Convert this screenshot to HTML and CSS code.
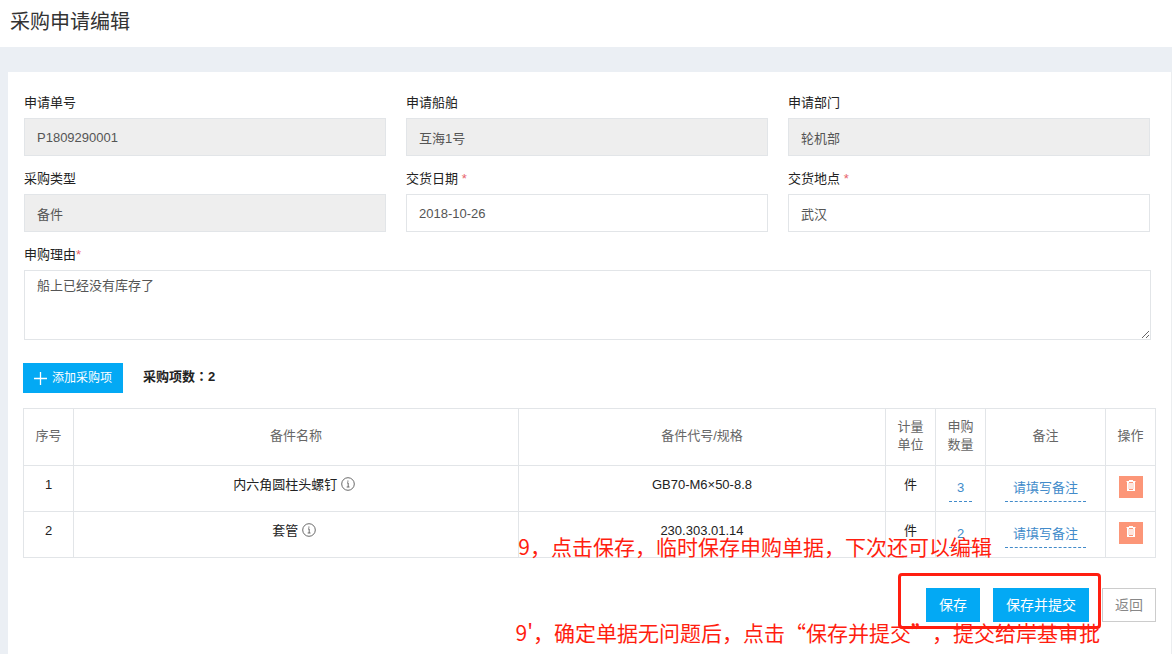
FILE: index.html
```html
<!DOCTYPE html>
<html lang="zh-CN">
<head>
<meta charset="utf-8">
<title>采购申请编辑</title>
<link rel="stylesheet" href="styles.css">
</head>
<body>
<svg class="sprite" aria-hidden="true">
  <symbol id="icon-info" viewBox="0 0 14 14">
    <circle cx="7" cy="7" r="6.3" fill="none" stroke="currentColor" stroke-width="0.8"/>
    <path d="M6 5.9h1.2v4M5.7 10h2.8" fill="none" stroke="currentColor" stroke-width="0.8"/>
    <rect x="6.4" y="3.6" width="1" height="1" fill="currentColor"/>
  </symbol>
  <symbol id="icon-trash" viewBox="0 0 10 12">
    <path d="M3 0h4v1H3z" fill="currentColor"/>
    <path d="M0.5 1h9v1h-9z" fill="currentColor"/>
    <path d="M1 2h8v9H1z" fill="currentColor"/>
    <path d="M3 2.5h4M3 9.5h4" stroke="#fc9678"/>
    <path d="M2 3h6v6H2z" fill="#fc9678" fill-opacity="0.25"/>
  </symbol>
  <symbol id="icon-plus" viewBox="0 0 12 12">
    <path d="M6 0v12M0 6h12" stroke="currentColor" stroke-width="1.2"/>
  </symbol>
</svg>

<header class="page-header">
  <h1 class="page-title">采购申请编辑</h1>
</header>

<main class="panel">
  <form class="form">
    <div class="form-grid">
      <div class="field">
        <label class="label" for="order-no">申请单号</label>
        <input class="input" id="order-no" type="text" value="P1809290001" disabled>
      </div>
      <div class="field">
        <label class="label" for="ship">申请船舶</label>
        <input class="input" id="ship" type="text" value="互海1号" disabled>
      </div>
      <div class="field">
        <label class="label" for="dept">申请部门</label>
        <input class="input" id="dept" type="text" value="轮机部" disabled>
      </div>
      <div class="field">
        <label class="label" for="type">采购类型</label>
        <input class="input" id="type" type="text" value="备件" disabled>
      </div>
      <div class="field">
        <label class="label" for="date">交货日期 <span class="required">*</span></label>
        <input class="input" id="date" type="text" value="2018-10-26">
      </div>
      <div class="field">
        <label class="label" for="place">交货地点 <span class="required">*</span></label>
        <input class="input" id="place" type="text" value="武汉">
      </div>
    </div>
    <div class="field field-wide">
      <label class="label" for="reason">申购理由<span class="required">*</span></label>
      <textarea class="input textarea" id="reason">船上已经没有库存了</textarea>
    </div>

    <div class="toolbar">
      <button class="btn btn-add" type="button"><svg class="icon-plus"><use href="#icon-plus"/></svg>添加采购项</button>
      <strong class="count">采购项数<span class="colon" lang="zh-TW">：</span>2</strong>
    </div>

    <table class="table">
      <colgroup>
        <col class="col-small"><col class="col-name"><col class="col-code"><col class="col-small"><col class="col-small"><col class="col-note"><col class="col-small">
      </colgroup>
      <thead>
        <tr>
          <th>序号</th><th>备件名称</th><th>备件代号/规格</th><th>计量单位</th><th>申购数量</th><th>备注</th><th>操作</th>
        </tr>
      </thead>
      <tbody>
        <tr>
          <td>1</td>
          <td>内六角圆柱头螺钉 <svg class="icon-info"><use href="#icon-info"/></svg></td>
          <td>GB70-M6×50-8.8</td>
          <td>件</td>
          <td class="cell-edit"><a class="editable" href="#">3</a></td>
          <td class="cell-edit"><a class="editable" href="#">请填写备注</a></td>
          <td><button class="btn-delete" type="button" aria-label="删除"><svg class="icon-trash"><use href="#icon-trash"/></svg></button></td>
        </tr>
        <tr>
          <td>2</td>
          <td>套管 <svg class="icon-info"><use href="#icon-info"/></svg></td>
          <td>230.303.01.14</td>
          <td>件</td>
          <td class="cell-edit"><a class="editable" href="#">2</a></td>
          <td class="cell-edit"><a class="editable" href="#">请填写备注</a></td>
          <td><button class="btn-delete" type="button" aria-label="删除"><svg class="icon-trash"><use href="#icon-trash"/></svg></button></td>
        </tr>
      </tbody>
    </table>

    <div class="actions">
      <button class="btn" type="button">保存</button>
      <button class="btn" type="button">保存并提交</button>
      <button class="btn btn-default" type="button">返回</button>
      <div class="highlight"></div>
      <p class="note note-save">9，点击保存，临时保存申购单据，下次还可以编辑</p>
      <p class="note note-submit">9'，确定单据无问题后，点击“保存并提交”，提交给岸基审批</p>
    </div>
  </form>
</main>
</body>
</html>
```

FILE: styles.css
```css
* {
  box-sizing: border-box;
}

body {
  margin: 0;
  min-height: 100vh;
  display: flex;
  flex-direction: column;
  background: #ebeff4;
  color: #222;
  font: 13px/18px "Liberation Sans", "Noto Sans CJK SC", sans-serif;
  text-spacing-trim: space-all;
}

button,
input,
textarea {
  font: inherit;
}

.sprite {
  position: absolute;
  width: 0;
  height: 0;
}

.page-header {
  padding: 8px 10px 11px;
  background: #fff;
}

.page-title {
  margin: 0;
  font-size: 20px;
  line-height: 28px;
  font-weight: 400;
  color: #333;
}

.panel {
  flex: 1;
  margin: 25px 0 0 8px;
  padding: 22px 15px 32px;
  background: #fff;
  border-right: 1px solid #eceef0;
}

.form-grid {
  display: grid;
  grid-template-columns: repeat(3, 1fr);
  gap: 20px;
  row-gap: 14px;
  margin: 0 6px 14px 1px;
}

.field {
  display: flex;
  flex-direction: column;
  gap: 6px;
}

.field-wide {
  margin: 0 5px 0 1px;
}

.label {
  line-height: 18px;
}

.required {
  color: #e7636b;
}

.input {
  width: 100%;
  height: 38px;
  padding: 0 12px;
  border: 1px solid #e2e5e8;
  border-radius: 0;
  background: #fff;
  color: #555;
}

.input:disabled {
  background: #eee;
}

.textarea {
  height: 70px;
  padding: 6px 12px;
  line-height: 18px;
  resize: both;
}

.toolbar {
  display: flex;
  align-items: center;
  gap: 20px;
  margin: 23px 0 15px;
}

.count {
  padding-bottom: 2px;
}

.colon {
  font-family: "Noto Sans CJK TC", sans-serif;
  line-height: 1;
}

.btn {
  height: 34px;
  padding: 0 13px;
  border: 0;
  background: #03a9f4;
  color: #fff;
  font-size: 14px;
  white-space: nowrap;
}

.btn-add {
  display: flex;
  align-items: center;
  gap: 5px;
  height: 30px;
  padding: 0 11px;
  font-size: 12px;
}

.icon-plus {
  width: 13px;
  height: 13px;
}

.table {
  width: 100%;
  table-layout: fixed;
  border-collapse: collapse;
}

.col-small {
  width: 50px;
}

.col-code {
  width: 33%;
}

.col-name {
  width: 40%;
}

.col-note {
  width: 120px;
}

.table th,
.table td {
  border: 1px solid #e2e5e8;
  text-align: center;
}

.table th {
  height: 57px;
  padding: 0 10px 2px;
  color: #666;
  font-weight: 400;
}

.table td {
  height: 46px;
  padding: 10px 0 0;
  vertical-align: top;
}

.table .cell-edit {
  padding-top: 9px;
}

.editable {
  display: inline-block;
  padding: 4px 8px;
  border-bottom: 1px dashed #428bca;
  color: #428bca;
  text-decoration: none;
}

.btn-delete {
  display: inline-flex;
  justify-content: center;
  width: 24px;
  height: 22px;
  padding: 4px 0 0;
  border: 0;
  background: #fc9678;
  color: #fff;
}

.icon-trash {
  width: 10px;
  height: 12px;
}

.icon-info {
  width: 14px;
  height: 14px;
  margin-right: 4px;
  vertical-align: -2px;
  color: #444;
}

.actions {
  position: relative;
  display: flex;
  justify-content: flex-end;
  gap: 13px;
  margin-top: 30px;
}

.btn-default {
  padding: 0 12px;
  border: 1px solid #ccc;
  background: #fff;
  color: #888;
}

/* Instruction callouts drawn over the form */
.highlight {
  position: absolute;
  top: -15px;
  right: 55px;
  width: 203px;
  height: 56px;
  border: 3px solid #ff1e10;
  border-radius: 4px;
  pointer-events: none;
}

.note {
  position: absolute;
  margin: 0;
  color: #ff1e10;
  font: 21px/30px "Noto Sans CJK SC", sans-serif;
  white-space: nowrap;
  pointer-events: none;
}

.note-save {
  top: -57px;
  right: 164px;
}

.note-submit {
  top: 29px;
  right: 56px;
}
```
